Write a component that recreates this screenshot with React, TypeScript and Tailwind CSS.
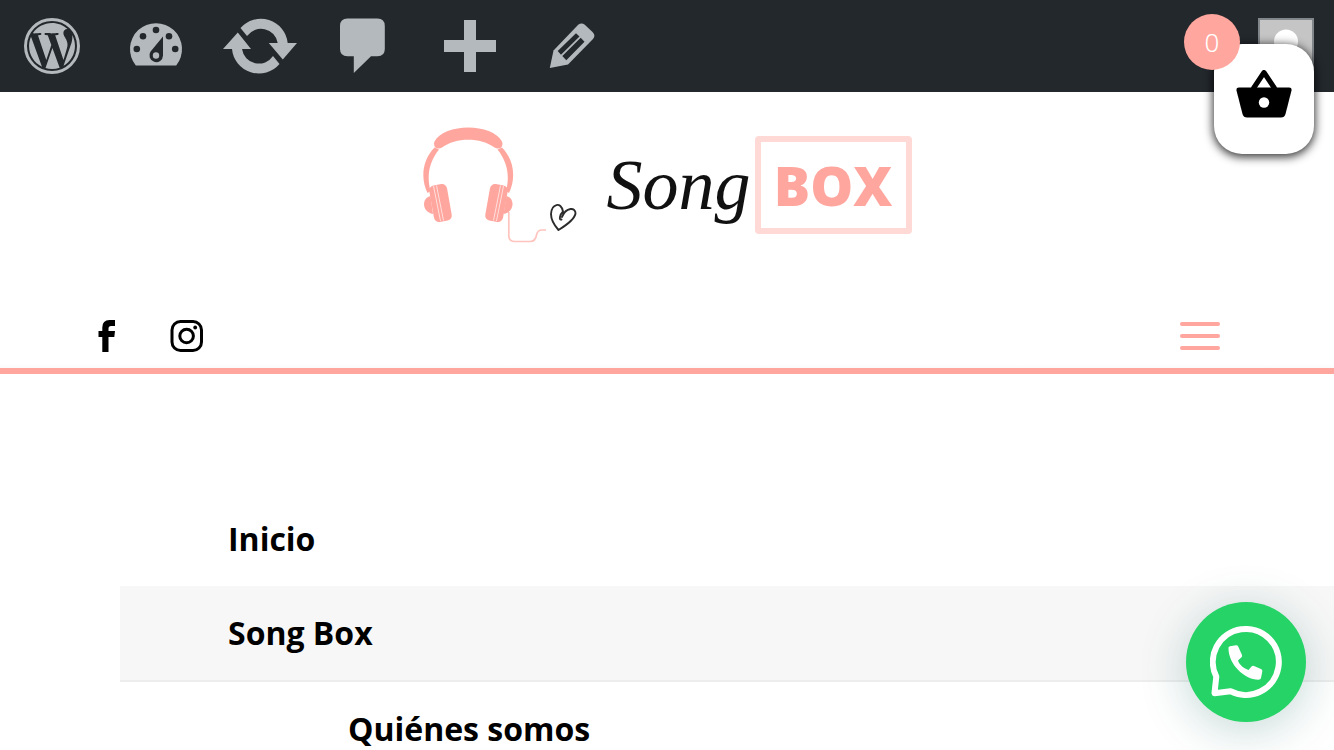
import React from "react";

function WordPressIcon() {
  return (
    <svg viewBox="0 0 56 56" className="size-14" fill="currentColor" aria-hidden="true">
      <circle cx="28" cy="28" r="26.5" fill="none" stroke="currentColor" strokeWidth="3" />
      <g transform="translate(28 28) scale(0.108) translate(-256 -256)">
        <path d="M61.7 169.4l101.5 278C92.2 413 43.3 340.2 43.3 256c0-30.9 6.6-60.1 18.4-86.6zm337.9 75.9c0-26.3-9.4-44.5-17.5-58.7-10.8-17.5-20.9-32.4-20.9-49.9 0-19.6 14.8-37.8 35.7-37.8.9 0 1.8.1 2.8.2-37.9-34.7-88.3-55.9-143.7-55.9-74.3 0-139.7 38.1-177.8 95.9 5 .2 9.7.3 13.7.3 22.2 0 56.7-2.7 56.7-2.7 11.5-.7 12.8 16.2 1.4 17.5 0 0-11.5 1.3-24.3 2l77.5 230.4L249.8 247l-33.1-90.8c-11.5-.7-22.3-2-22.3-2-11.5-.7-10.1-18.2 1.3-17.5 0 0 35.1 2.7 56 2.7 22.2 0 56.7-2.7 56.7-2.7 11.5-.7 12.8 16.2 1.4 17.5 0 0-11.5 1.3-24.3 2l76.9 228.7 21.2-70.9c9-29.4 16-50.5 16-68.7zm-139.9 29.3l-63.8 185.5c19.1 5.6 39.2 8.7 60.1 8.7 24.8 0 48.5-4.3 70.6-12.1-.6-.9-1.1-1.9-1.5-2.9l-65.4-179.2zm183-120.7c.9 6.8 1.4 14 1.4 21.9 0 21.6-4 45.8-16.2 76.2l-65 187.9C426.2 403 468.7 334.5 468.7 256c0-37-9.4-71.8-26-102.1z" />
      </g>
    </svg>
  );
}

function DashboardIcon() {
  return (
    <svg viewBox="0 0 104 92" className="h-[92px] w-[104px]" aria-hidden="true">
      <path d="M31.800 65.500A26 26 0 1 1 72.200 65.500Z" fill="currentColor" />
      <g fill="#23282d">
        <circle cx="32.800" cy="49" r="3.300" />
        <circle cx="39" cy="36.200" r="3.300" />
        <circle cx="52" cy="30" r="3.300" />
        <circle cx="65" cy="36.200" r="3.300" />
        <circle cx="71.200" cy="49" r="3.300" />
        <path d="M59 36.500V55.500A6.800 6.800 0 1 1 46.600 51.500Z" />
      </g>
      <circle cx="52" cy="55.500" r="3.200" fill="currentColor" />
    </svg>
  );
}

function UpdatesIcon() {
  return (
    <svg viewBox="0 0 104 92" className="h-[92px] w-[104px]" fill="currentColor" aria-hidden="true">
      <path d="M32.500 28A27 27 0 0 1 79.700 43H89L74.800 59.500L60.800 43H69.700A17 17 0 0 0 39 36Z" />
      <path d="M71.500 64A27 27 0 0 1 24 49H15L29.800 32.500L43 49H34A17 17 0 0 0 65 56Z" />
    </svg>
  );
}

function CommentsIcon() {
  return (
    <svg viewBox="0 0 104 92" className="h-[92px] w-[104px]" fill="currentColor" aria-hidden="true">
      <path d="M35.500 18.500H65.500Q72.800 18.500 72.800 26V49Q72.800 56.300 65.500 56.300H59L41.800 73V56.300H35.500Q28 56.300 28 49V26Q28 18.500 35.500 18.500Z" />
    </svg>
  );
}

function PlusIcon() {
  return (
    <svg viewBox="0 0 104 92" className="h-[92px] w-[104px]" fill="currentColor" aria-hidden="true">
      <path d="M48 20H60V40H80V52H60V72H48V52H28V40H48Z" />
    </svg>
  );
}

function PencilIcon() {
  return (
    <svg viewBox="0 0 104 92" className="h-[92px] w-[104px]" aria-hidden="true">
      <path
        d="M29.800 68L33.500 50.500L58.200 24.800Q61.500 22 64.800 24.800L72.500 32Q76 35.500 73 39L48 64.500Z"
        fill="currentColor"
      />
      <path d="M37.700 51L56 33.200L59.500 36.500L41 54.800ZM42.300 56L60.700 37.800L64.500 41.700L46.300 60.200Z" fill="#23282d" />
    </svg>
  );
}

const adminItems = [
  { label: "WordPress", Icon: WordPressIcon },
  { label: "Escritorio", Icon: DashboardIcon },
  { label: "Actualizaciones", Icon: UpdatesIcon },
  { label: "Comentarios", Icon: CommentsIcon },
  { label: "Nuevo", Icon: PlusIcon },
  { label: "Editar", Icon: PencilIcon },
];

function AdminBar() {
  return (
    <nav className="flex h-[92px] items-center justify-between bg-[#23282d] pr-5 text-[#b4b9be]">
      <div className="flex">
        {adminItems.map(({ label, Icon }) => (
          <a key={label} href="#" aria-label={label} className="flex h-[92px] w-[104px] items-center justify-center">
            <Icon />
          </a>
        ))}
      </div>
      <a href="#" aria-label="Mi cuenta" className="size-14 border-2 border-[#82878c] bg-[#c5c5c5]">
        <svg viewBox="0 0 52 52" fill="#fff" aria-hidden="true">
          <circle cx="26" cy="21.500" r="12" />
          <path d="M6 52C8 40 16 36 26 36S44 40 46 52Z" />
        </svg>
      </a>
    </nav>
  );
}

function Headphones() {
  return (
    <svg viewBox="422 125 154 118" className="h-[118px] w-[154px]" aria-hidden="true">
      <path
        d="M507.800 211V235Q508 240.500 514 240.500H529Q534.500 240.500 535.500 234Q536.500 229 541 229H545"
        fill="none"
        stroke="#ffc4be"
        strokeWidth="1.700"
      />
      <g fill="#ffa69e">
        <path d="M433.500 146.500C421 159 419.500 178 426.500 192L429.500 190C425.500 175 428 161 438 148.500Z" />
        <path d="M501 146.500C513.500 159 515 178 508 192L505 190C509 175 506.500 161 496.500 148.500Z" />
        <path d="M433.500 140.500C443 121.800 491.500 121.800 501 140.500C503 146 498 149.500 493.500 146.500C480 136 454.500 136 441 146.500C436.500 149.500 431.500 146 433.500 140.500Z" />
        <path d="M429.500 195C420.500 197 420.500 211 432 213Z" />
        <path d="M505.500 195C514 197 514 211 502.500 213Z" />
        <rect x="430.500" y="183.500" width="18" height="37" rx="5" transform="rotate(-10 439.500 202)" />
        <rect x="486.500" y="183.500" width="18" height="37" rx="5" transform="rotate(10 495.500 202)" />
      </g>
      <path
        d="M432.500 185L439.500 220M435.500 184.500L442.500 219.500M502.500 185L495.500 220M499.500 184.500L492.500 219.500"
        stroke="#ffe0dd"
        strokeWidth="1"
      />
      <path
        d="M560.500 218.500C557.500 219.500 559 213.500 562 210.500C560 200 550.500 203 550 213C550 219 553.500 224.500 557.500 229C564 225 573.500 219 574.500 212.500C575 206 565 206 561 216"
        fill="none"
        stroke="#2c2c2c"
        strokeWidth="1.900"
        strokeLinecap="round"
        strokeLinejoin="round"
      />
    </svg>
  );
}

function Logo() {
  return (
    <a href="#" className="mx-auto flex h-[118px] w-fit items-center">
      <Headphones />
      <span className="ml-[30px] font-['Liberation_Serif',serif] text-[72px] leading-[96px] italic text-[#111]">Song</span>
      <span className="ml-1 flex h-[98px] w-[157px] items-center justify-center rounded border-[6px] border-[#ffd9d5] text-[54px] font-extrabold text-[#ffa69e]">
        BOX
      </span>
    </a>
  );
}

function FacebookIcon() {
  return (
    <svg viewBox="0 0 18 32" className="h-8 w-[18px]" aria-hidden="true">
      <path d="M17 0V6H13Q10.500 6 10.500 8.500V11H17L16.300 17H10.500V32H4.300V17H0.500V11H4.300V7.500Q4.300 0 11.500 0Z" />
    </svg>
  );
}

function InstagramIcon() {
  return (
    <svg viewBox="0 0 34 32" className="h-8 w-[34px]" aria-hidden="true">
      <rect x="2" y="1.500" width="29.500" height="29" rx="8.500" fill="none" stroke="#000" strokeWidth="3" />
      <circle cx="16.600" cy="16" r="6.800" fill="none" stroke="#000" strokeWidth="3" />
      <circle cx="25.200" cy="7.500" r="1.900" />
    </svg>
  );
}

function Header() {
  return (
    <header className="border-b-[6px] border-[#ffa69e] bg-white pt-[34px]">
      <Logo />
      <div className="mt-[76px] flex h-8 items-center justify-between pr-[114px] pl-[98px]">
        <div className="flex gap-[54px]">
          <a href="#" aria-label="Facebook">
            <FacebookIcon />
          </a>
          <a href="#" aria-label="Instagram">
            <InstagramIcon />
          </a>
        </div>
        <button type="button" aria-label="Menú" className="flex w-10 flex-col gap-2">
          <span className="h-1 rounded-full bg-[#ffa69e]" />
          <span className="h-1 rounded-full bg-[#ffa69e]" />
          <span className="h-1 rounded-full bg-[#ffa69e]" />
        </button>
      </div>
      <div className="mt-3 h-1 bg-linear-to-b from-white to-[#fafafa]" />
    </header>
  );
}

function Menu() {
  return (
    <nav className="mt-[118px] ml-[120px] text-[32px] leading-[46px] font-bold text-black">
      <ul>
        <li>
          <a href="#" className="block py-6 pl-[108px]">
            Inicio
          </a>
        </li>
        <li>
          <a href="#" className="block border-b-2 border-[#ededed] bg-[#f7f7f7] py-6 pl-[108px]">
            Song Box
          </a>
          <ul>
            <li>
              <a href="#" className="block pt-6 pl-[228px]">
                Quiénes somos
              </a>
            </li>
          </ul>
        </li>
      </ul>
    </nav>
  );
}

function Cart() {
  return (
    <button
      type="button"
      aria-label="Carrito"
      className="fixed top-11 right-5 flex h-[110px] w-[100px] justify-center rounded-[28px] bg-white pt-[26px] shadow-[0_2px_10px_1px_rgba(0,0,0,0.8)]"
    >
      <svg viewBox="0 0 56 48" className="h-12 w-14" aria-hidden="true">
        <path d="M17 19L28 2.500L39 19" fill="none" stroke="#000" strokeWidth="5" strokeLinejoin="round" />
        <path d="M3 17.500H53Q56 17.500 55.500 20.500L49.500 44Q48.500 47.500 45 47.500H11Q7.500 47.500 6.500 44L0.500 20.500Q0 17.500 3 17.500Z" />
        <circle cx="28" cy="32.500" r="5.200" fill="#fff" />
      </svg>
      <span className="absolute -top-[30px] -left-[30px] flex size-14 items-center justify-center rounded-full bg-[#ffa69e] font-['Noto_Sans',sans-serif] text-[26px] font-light text-white">
        0
      </span>
    </button>
  );
}

function WhatsAppButton() {
  return (
    <button
      type="button"
      aria-label="WhatsApp"
      className="fixed right-7 bottom-7 flex size-[120px] items-center justify-center rounded-full bg-[#25d366] shadow-[0_8px_48px_rgba(7,94,84,0.24)]"
    >
      <svg viewBox="0 0 72 72" className="size-[72px]" aria-hidden="true">
        <path
          d="M6.800 51A33 33 0 1 1 21 65.500L5 67.500Z"
          fill="none"
          stroke="#fff"
          strokeWidth="6"
          strokeLinejoin="round"
          transform="translate(-0.500 -0.300)"
        />
        <path
          d="M18.500 22.500Q18 20.500 20 20.200L26 19.200Q27.500 19 28.200 20.500L32 29Q32.500 30.500 31.500 31.300L28 34.500C29.500 39 34 42.500 38.500 44L41.500 40.500Q42.500 39.500 44 40L51 43Q52.700 43.800 52.300 45.500L51 52Q50.700 53.800 48.500 53.800C34 53.500 18.500 38 18.500 22.500Z"
          fill="#fff"
        />
      </svg>
    </button>
  );
}

export default function App() {
  return (
    <div className="min-h-screen overflow-x-hidden bg-white font-['Open_Sans',sans-serif]">
      <AdminBar />
      <Header />
      <main>
        <Menu />
      </main>
      <Cart />
      <WhatsAppButton />
    </div>
  );
}
